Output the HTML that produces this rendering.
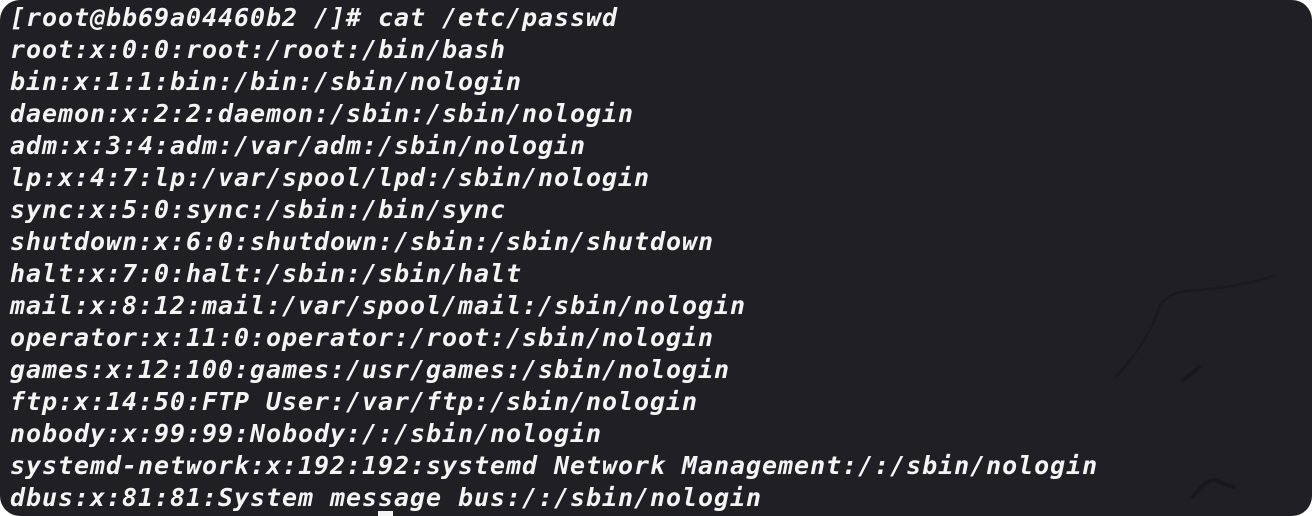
<!DOCTYPE html>
<html><head><style>
html,body{margin:0;padding:0;background:#fff;}
.t{position:absolute;left:0;top:0;width:1312px;height:516px;background:#202024;border-radius:20px;overflow:hidden;}
pre{margin:0;position:absolute;left:10px;top:2px;font-family:"DejaVu Sans Mono","Liberation Mono",monospace;font-weight:bold;font-style:oblique;font-size:25px;letter-spacing:0.95px;line-height:32px;color:#f4f4f4;}
.c{position:absolute;left:378px;top:511px;width:15px;height:5px;background:#f4f4f4;}
</style></head><body><div class="t">
<svg width="1312" height="516" style="position:absolute;left:0;top:0">
<path d="M1115 378 Q1150 340 1160 305 Q1170 290 1200 290 Q1250 285 1275 275" stroke="#18181b" stroke-width="2.5" fill="none" opacity=".6"/>
<path d="M1181 381 Q1195 372 1200 366" stroke="#18181b" stroke-width="4" fill="none"/>
<path d="M1192 498 Q1205 480 1215 480 L1235 488" stroke="#18181b" stroke-width="4" fill="none"/>
</svg>
<pre>[root@bb69a04460b2 /]# cat /etc/passwd
root:x:0:0:root:/root:/bin/bash
bin:x:1:1:bin:/bin:/sbin/nologin
daemon:x:2:2:daemon:/sbin:/sbin/nologin
adm:x:3:4:adm:/var/adm:/sbin/nologin
lp:x:4:7:lp:/var/spool/lpd:/sbin/nologin
sync:x:5:0:sync:/sbin:/bin/sync
shutdown:x:6:0:shutdown:/sbin:/sbin/shutdown
halt:x:7:0:halt:/sbin:/sbin/halt
mail:x:8:12:mail:/var/spool/mail:/sbin/nologin
operator:x:11:0:operator:/root:/sbin/nologin
games:x:12:100:games:/usr/games:/sbin/nologin
ftp:x:14:50:FTP User:/var/ftp:/sbin/nologin
nobody:x:99:99:Nobody:/:/sbin/nologin
systemd-network:x:192:192:systemd Network Management:/:/sbin/nologin
dbus:x:81:81:System message bus:/:/sbin/nologin</pre>
<div class="c"></div>
</div></body></html>
